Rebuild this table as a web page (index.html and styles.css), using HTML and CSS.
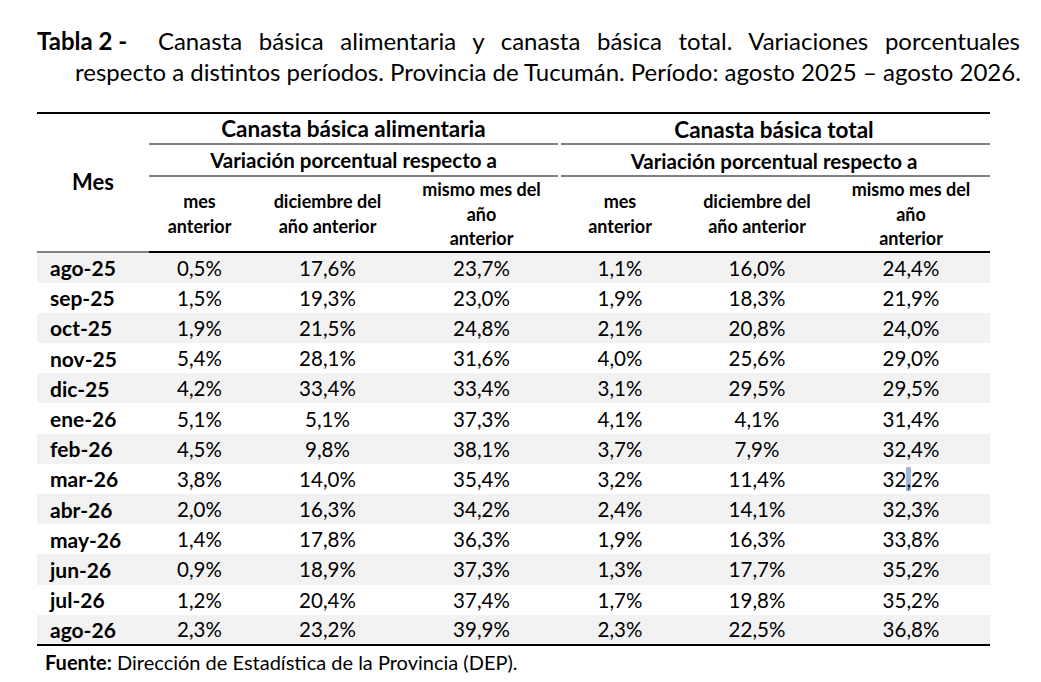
FILE: index.html
```html
<!DOCTYPE html>
<html>
  <head>
    <title>Tabla 2 - Canasta básica</title>
    <link rel="stylesheet" href="styles.css">
  </head>
  <body>
    <div class="page">
      <div class="title">
        <div class="title-line"><span class="label">Tabla 2 -</span> Canasta básica alimentaria y canasta básica total. Variaciones porcentuales</div>
        <div class="title-line second">respecto a distintos períodos. Provincia de Tucumán. Período: agosto 2025 – agosto 2026.</div>
      </div>

      <table class="cb-table">
        <colgroup>
          <col class="c-mes">
          <col class="c1"><col class="c2"><col class="c3">
          <col class="c4"><col class="c5"><col class="c6">
        </colgroup>
        <thead>
          <tr class="h1">
            <th class="mes" rowspan="3">Mes</th>
            <th class="grp" colspan="3">Canasta básica alimentaria</th>
            <th class="grp right" colspan="3">Canasta básica total</th>
          </tr>
          <tr class="h2">
            <th class="grp" colspan="3">Variación porcentual respecto a</th>
            <th class="grp right" colspan="3">Variación porcentual respecto a</th>
          </tr>
          <tr class="h3">
            <th>mes<br>anterior</th>
            <th>diciembre del<br>año anterior</th>
            <th>mismo mes del<br>año<br>anterior</th>
            <th>mes<br>anterior</th>
            <th>diciembre del<br>año anterior</th>
            <th>mismo mes del<br>año<br>anterior</th>
          </tr>
        </thead>
        <tbody>
          <tr class="shade"><td class="m">ago-25</td><td>0,5%</td><td>17,6%</td><td>23,7%</td><td>1,1%</td><td>16,0%</td><td>24,4%</td></tr>
          <tr><td class="m">sep-25</td><td>1,5%</td><td>19,3%</td><td>23,0%</td><td>1,9%</td><td>18,3%</td><td>21,9%</td></tr>
          <tr class="shade"><td class="m">oct-25</td><td>1,9%</td><td>21,5%</td><td>24,8%</td><td>2,1%</td><td>20,8%</td><td>24,0%</td></tr>
          <tr><td class="m">nov-25</td><td>5,4%</td><td>28,1%</td><td>31,6%</td><td>4,0%</td><td>25,6%</td><td>29,0%</td></tr>
          <tr class="shade"><td class="m">dic-25</td><td>4,2%</td><td>33,4%</td><td>33,4%</td><td>3,1%</td><td>29,5%</td><td>29,5%</td></tr>
          <tr><td class="m">ene-26</td><td>5,1%</td><td>5,1%</td><td>37,3%</td><td>4,1%</td><td>4,1%</td><td>31,4%</td></tr>
          <tr class="shade"><td class="m">feb-26</td><td>4,5%</td><td>9,8%</td><td>38,1%</td><td>3,7%</td><td>7,9%</td><td>32,4%</td></tr>
          <tr><td class="m">mar-26</td><td>3,8%</td><td>14,0%</td><td>35,4%</td><td>3,2%</td><td>11,4%</td><td>32<span class="sel">,</span>2%</td></tr>
          <tr class="shade"><td class="m">abr-26</td><td>2,0%</td><td>16,3%</td><td>34,2%</td><td>2,4%</td><td>14,1%</td><td>32,3%</td></tr>
          <tr><td class="m">may-26</td><td>1,4%</td><td>17,8%</td><td>36,3%</td><td>1,9%</td><td>16,3%</td><td>33,8%</td></tr>
          <tr class="shade"><td class="m">jun-26</td><td>0,9%</td><td>18,9%</td><td>37,3%</td><td>1,3%</td><td>17,7%</td><td>35,2%</td></tr>
          <tr><td class="m">jul-26</td><td>1,2%</td><td>20,4%</td><td>37,4%</td><td>1,7%</td><td>19,8%</td><td>35,2%</td></tr>
          <tr class="shade"><td class="m">ago-26</td><td>2,3%</td><td>23,2%</td><td>39,9%</td><td>2,3%</td><td>22,5%</td><td>36,8%</td></tr>
        </tbody>
      </table>

      <p class="source"><b>Fuente:</b> Dirección de Estadística de la Provincia (DEP).</p>
    </div>
  </body>
</html>
```

FILE: styles.css
```css
body {
  margin: 0;
  padding: 0;
  background: #fff;
  color: #000;
  font-family: Lato, "Open Sans", sans-serif;
}

.page {
  padding: 25px 21px 0 37px;
}

/* Title, justified like the document */
.title {
  font-size: 24px;
  line-height: 31px;
}

.title-line {
  text-align: justify;
  text-align-last: justify;
  white-space: nowrap;
}

.title-line.second {
  padding-left: 38px;
}

.label {
  display: inline-block;
  font-weight: 700;
  margin-right: 14px;
}

/* Table */
.cb-table {
  margin-top: 25px;
  width: 953px;
  table-layout: fixed;
  border-collapse: separate;
  border-spacing: 0;
}

.c-mes { width: 112px; }
.c1 { width: 101px; }
.c2 { width: 155px; }
.c3 { width: 153px; }
.c4 { width: 124px; }
.c5 { width: 150px; }
.c6 { width: 158px; }

.cb-table th,
.cb-table td {
  padding: 0;
  box-sizing: border-box;
  text-align: center;
  vertical-align: middle;
}

.cb-table th {
  font-weight: 700;
}

.h1 th {
  height: 33px;
  font-size: 22.5px;
  border-top: 2px solid #000;
}

.h2 th {
  height: 32px;
  font-size: 20.5px;
}

.grp {
  border-bottom: 2px solid #808080;
}

.grp.right {
  border-bottom: none;
  background: linear-gradient(#808080, #808080) no-repeat right bottom / calc(100% - 3px) 2px;
}

.h3 th {
  height: 73px;
  font-size: 18px;
  line-height: 24.5px;
  border-bottom: 2px solid #000;
}

.h1 th.mes {
  font-size: 22px;
  border-bottom: 2px solid #808080;
  padding-bottom: 2px;
}

.cb-table td {
  height: 30.2px;
  font-size: 20.5px;
}

.cb-table td.m {
  text-align: left;
  padding-left: 13px;
  font-size: 21px;
  font-weight: 700;
}

.shade td {
  background: #f2f2f2;
}

tbody tr:last-child td {
  height: 31px;
  border-bottom: 2px solid #000;
}

.sel {
  background: #9dbbd9;
}

.source {
  margin: 4px 0 0 8px;
  font-size: 20px;
}
```
